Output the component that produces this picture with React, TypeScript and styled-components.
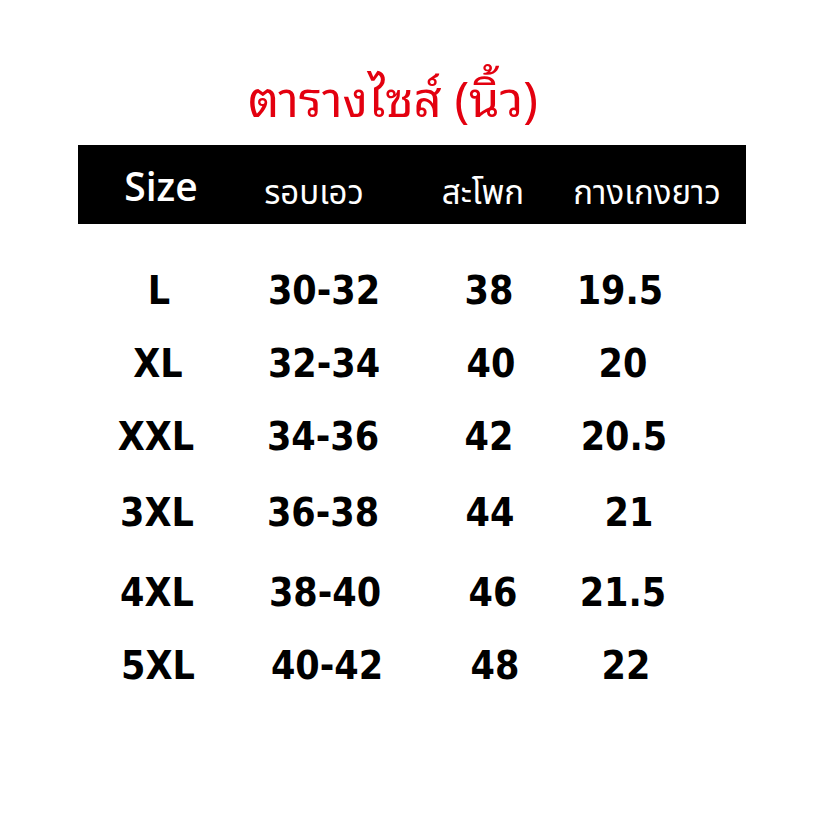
import * as React from 'react';
import styled, { createGlobalStyle } from 'styled-components';

const thaiStack = `"Noto Sans Thai", "Noto Sans Thai UI", "Loma", "Garuda", "Tlwg Typist", "Noto Sans", sans-serif`;
const loopedStack = `"Noto Sans Thai Looped", "Noto Serif Thai", "Norasi", "Loma", "Garuda", "Noto Sans", sans-serif`;

const GlobalStyle = createGlobalStyle`
  html, body {
    margin: 0;
    padding: 0;
    background: #fff;
  }
`;

const Page = styled.div`
  width: 818px;
  height: 818px;
  background: #fff;
  padding-top: 68px;
  box-sizing: border-box;
`;

const Title = styled.h1`
  margin: 0;
  padding-right: 32px;
  height: 77px;
  text-align: center;
  font-family: ${loopedStack};
  font-weight: 400;
  font-size: 49px;
  line-height: 54px;
  color: #e3000f;
`;

const Table = styled.div`
  width: 668px;
  margin-left: 78px;
`;

const HeaderBar = styled.div`
  display: grid;
  grid-template-columns: 166px 140px 198px 130px 1fr;
  align-items: center;
  height: 79px;
  background: #000;
  color: #fff;
`;

const HeadCell = styled.div<{ $size?: boolean }>`
  display: flex;
  justify-content: center;
  white-space: nowrap;
  font-family: ${(p) => (p.$size ? `"Open Sans", "Noto Sans", sans-serif` : thaiStack)};
  font-weight: ${(p) => (p.$size ? 600 : 400)};
  font-size: ${(p) => (p.$size ? '39px' : '33px')};
  padding-top: ${(p) => (p.$size ? '2px' : '18px')};
`;

const Body = styled.div`
  padding-top: 30px;
`;

const Row = styled.div<{ $push?: number }>`
  display: grid;
  grid-template-columns: 160px 172px 162px 104px 1fr;
  align-items: center;
  height: 73px;
  margin-top: ${(p) => p.$push ?? 0}px;
`;

const Cell = styled.div<{ $nudge?: number }>`
  display: flex;
  justify-content: center;
  white-space: nowrap;
  font-family: "DejaVu Sans Condensed", "DejaVu Sans", sans-serif;
  font-stretch: condensed;
  font-weight: 700;
  font-size: 39px;
  line-height: 73px;
  color: #000;
  transform: translateX(${(p) => p.$nudge ?? 0}px);
`;

type SizeRow = { size: string; waist: string; hip: string; length: string; push?: number; nudge?: number[] };

const rows: SizeRow[] = [
  { size: 'L', waist: '30-32', hip: '38', length: '19.5', nudge: [1, 0, -2, -4] },
  { size: 'XL', waist: '32-34', hip: '40', length: '20', nudge: [0, 0, 0, -1] },
  { size: 'XXL', waist: '34-36', hip: '42', length: '20.5', nudge: [-2, -1, -2, 0] },
  { size: '3XL', waist: '36-38', hip: '44', length: '21', push: 3, nudge: [-1, -1, -1, 5] },
  { size: '4XL', waist: '38-40', hip: '46', length: '21.5', push: 7, nudge: [-1, 1, 2, -1] },
  { size: '5XL', waist: '40-42', hip: '48', length: '22', nudge: [0, 3, 4, 2] },
];

const App = () => {
  return (
    <Page>
      <GlobalStyle />
      <Title>ตารางไซส์ (นิ้ว)</Title>
      <Table>
        <HeaderBar>
          <HeadCell $size>Size</HeadCell>
          <HeadCell>รอบเอว</HeadCell>
          <HeadCell>สะโพก</HeadCell>
          <HeadCell>กางเกงยาว</HeadCell>
        </HeaderBar>
        <Body>
          {rows.map((r) => (
            <Row key={r.size} $push={r.push}>
              <Cell $nudge={r.nudge?.[0]}>{r.size}</Cell>
              <Cell $nudge={r.nudge?.[1]}>{r.waist}</Cell>
              <Cell $nudge={r.nudge?.[2]}>{r.hip}</Cell>
              <Cell $nudge={r.nudge?.[3]}>{r.length}</Cell>
            </Row>
          ))}
        </Body>
      </Table>
    </Page>
  );
};

export default App;
